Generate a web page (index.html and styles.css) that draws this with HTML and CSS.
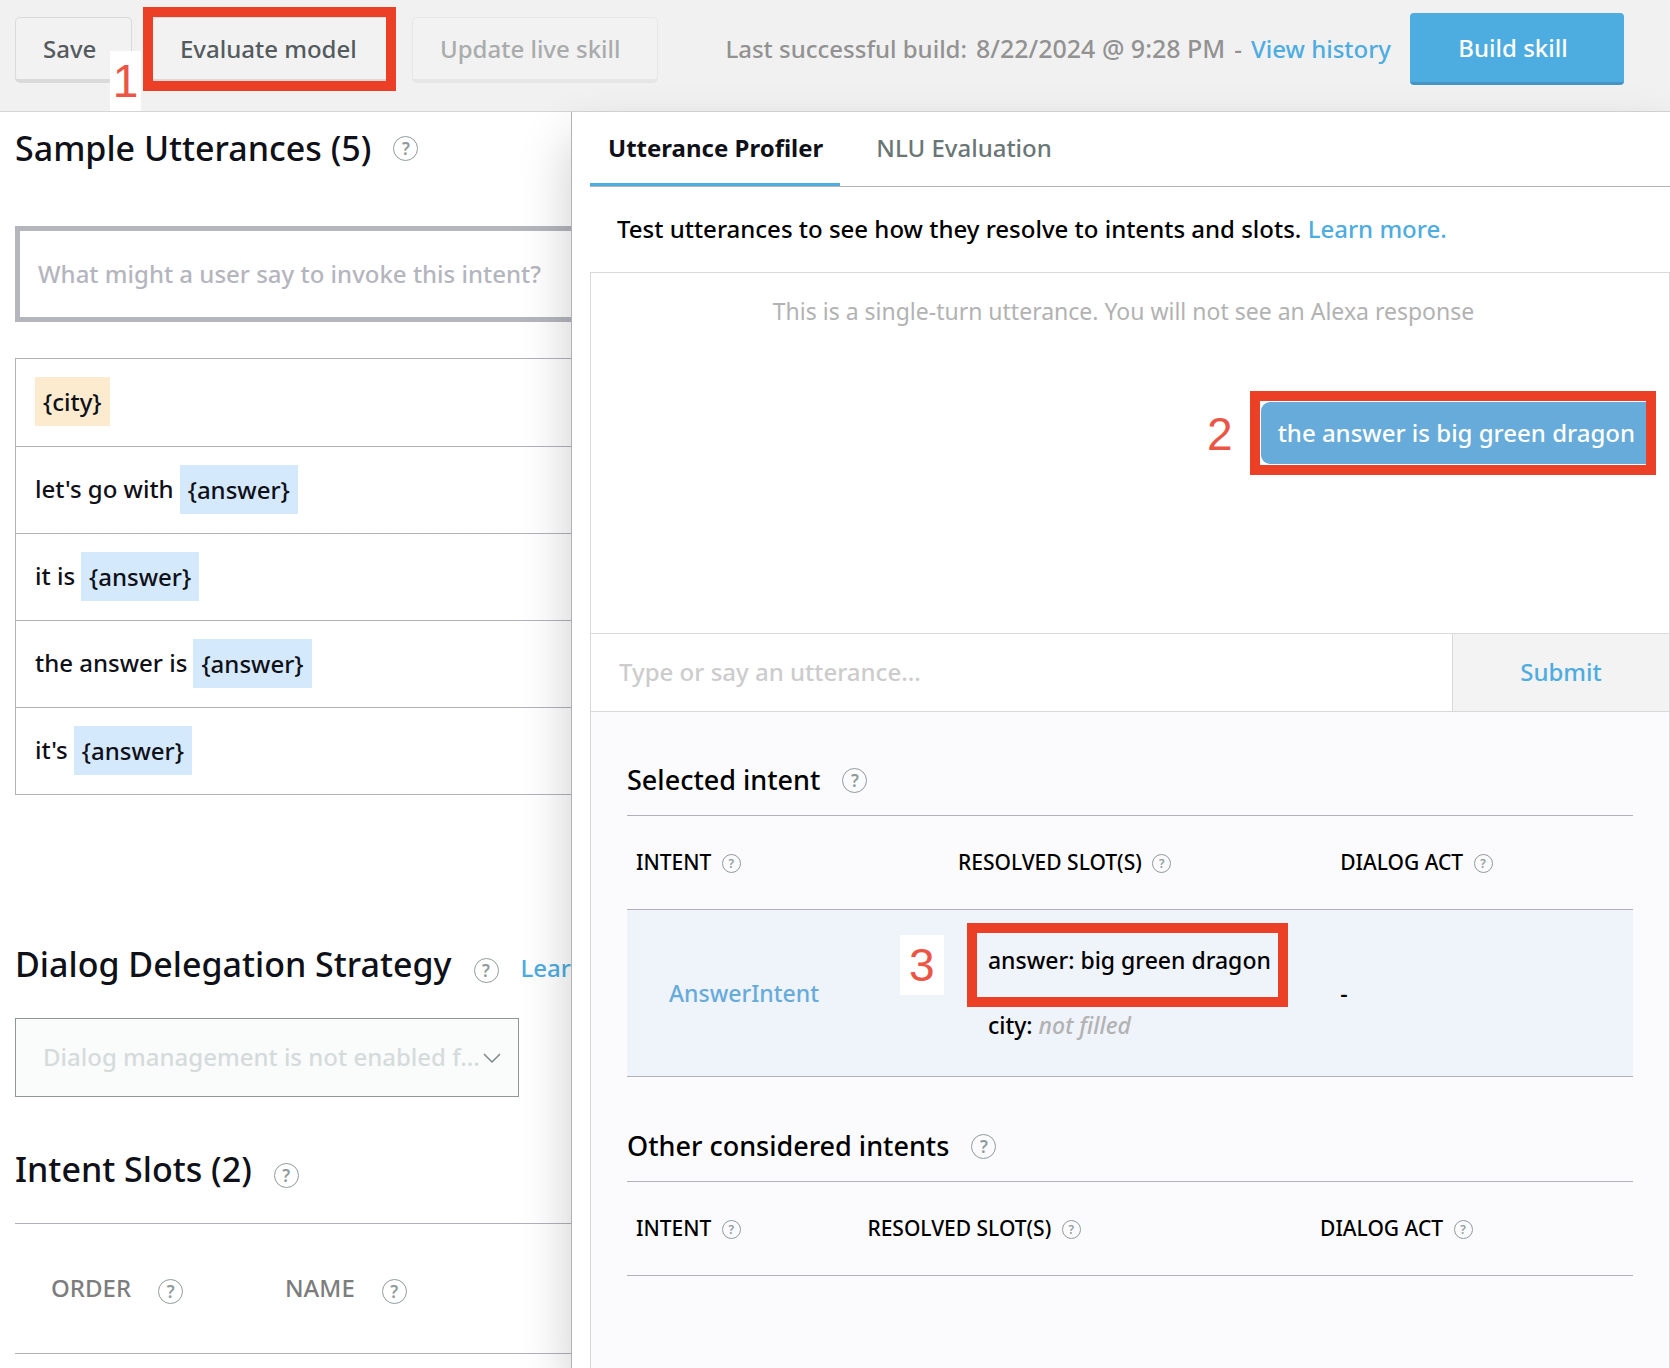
FILE: index.html
```html
<!DOCTYPE html>
<html lang="en">
<head>
<meta charset="utf-8">
<title>AnswerIntent - Interaction model</title>
<link rel="stylesheet" href="styles.css">
</head>
<body>
<header class="toolbar">
  <div class="anchor">
    <button class="btn btn-save" type="button">Save</button>
    <span class="step step-one">1</span>
  </div>
  <div class="anchor framed framed-button">
    <button class="btn btn-evaluate" type="button">Evaluate model</button>
  </div>
  <button class="btn btn-update" type="button" disabled>Update live skill</button>
  <p class="status">
    <span>Last successful build:</span>
    <time>8/22/2024 @ 9:28 PM</time>
    <span>-</span>
    <a href="#history">View history</a>
  </p>
  <button class="btn-build" type="button">Build skill</button>
</header>

<div class="workspace">
  <main class="editor">
    <section>
      <div class="heading">
        <h1>Sample Utterances (5)</h1>
        <span class="help">?</span>
      </div>
      <input class="utterance-input" type="text" aria-label="Sample utterance" placeholder="What might a user say to invoke this intent?">
      <ul class="utterances">
        <li><span class="slot slot-city">{city}</span></li>
        <li>let's go with <span class="slot">{answer}</span></li>
        <li>it is <span class="slot">{answer}</span></li>
        <li>the answer is <span class="slot">{answer}</span></li>
        <li>it's <span class="slot">{answer}</span></li>
      </ul>
    </section>

    <section class="delegation">
      <div class="heading heading-low">
        <h2>Dialog Delegation Strategy</h2>
        <span class="help">?</span>
        <a href="#learn">Learn more</a>
      </div>
      <div class="select">
        <select aria-label="Dialog delegation strategy" disabled>
          <option>Dialog management is not enabled f...</option>
        </select>
        <svg class="chevron" viewBox="0 0 18 11" width="18" height="11" aria-hidden="true"><path d="M1 1l8 8 8-8" fill="none" stroke="#7d8787" stroke-width="1.5"/></svg>
      </div>
    </section>

    <section class="slots">
      <div class="heading heading-low">
        <h2>Intent Slots (2)</h2>
        <span class="help">?</span>
      </div>
      <table class="slot-table">
        <thead>
          <tr>
            <th><span class="label">ORDER <span class="help">?</span></span></th>
            <th><span class="label">NAME <span class="help">?</span></span></th>
          </tr>
        </thead>
      </table>
    </section>
  </main>

  <aside class="panel">
    <nav class="tabs">
      <a class="tab tab-active" href="#profiler">Utterance Profiler</a>
      <a class="tab" href="#nlu">NLU Evaluation</a>
    </nav>
    <p class="intro">Test utterances to see how they resolve to intents and slots. <a href="#more">Learn more.</a></p>

    <div class="profiler">
      <div class="chat">
        <p class="notice">This is a single-turn utterance. You will not see an Alexa response</p>
        <div class="anchor framed framed-bubble">
          <span class="step step-two">2</span>
          <p class="bubble">the answer is big green dragon</p>
        </div>
      </div>
      <form class="entry">
        <input type="text" aria-label="Utterance" placeholder="Type or say an utterance...">
        <button type="button">Submit</button>
      </form>

      <div class="results">
        <section>
          <h3>Selected intent <span class="help">?</span></h3>
          <table class="intents intents-selected">
            <thead>
              <tr>
                <th>INTENT <span class="help help-small">?</span></th>
                <th>RESOLVED SLOT(S) <span class="help help-small">?</span></th>
                <th>DIALOG ACT <span class="help help-small">?</span></th>
              </tr>
            </thead>
            <tbody>
              <tr>
                <td class="intent-name"><a href="#answer">AnswerIntent</a></td>
                <td class="resolved">
                  <div class="anchor framed framed-slot"><span class="step step-three">3</span>answer: big green dragon</div>
                  <div>city: <em>not filled</em></div>
                </td>
                <td>-</td>
              </tr>
            </tbody>
          </table>
        </section>
        <section>
          <h3>Other considered intents <span class="help">?</span></h3>
          <table class="intents intents-other">
            <thead>
              <tr>
                <th>INTENT <span class="help help-small">?</span></th>
                <th>RESOLVED SLOT(S) <span class="help help-small">?</span></th>
                <th>DIALOG ACT <span class="help help-small">?</span></th>
              </tr>
            </thead>
          </table>
        </section>
      </div>
    </div>
  </aside>
</div>
</body>
</html>
```
FILE: styles.css
```css
* {
  box-sizing: border-box;
}

body {
  margin: 0;
  min-height: 100vh;
  display: flex;
  flex-direction: column;
  background: #fff;
  color: #0f1018;
  font: 500 24px/32px "Noto Sans", "Open Sans", sans-serif;
}

h1, h2, h3, p, ul {
  margin: 0;
  padding: 0;
}

button, input, select {
  font: inherit;
  margin: 0;
}

a {
  color: #4dace0;
  text-decoration: none;
}

.anchor {
  position: relative;
}

/* Toolbar */
.toolbar {
  display: flex;
  align-items: flex-start;
  padding: 13px 46px 26px 15px;
  background: #f1f1f1;
  border-bottom: 1px solid #d5d5d5;
  white-space: nowrap;
}

.btn {
  height: 66px;
  margin: 4px 20px 0 0;
  padding: 0 0 0 27px;
  border: 1px solid #dadada;
  border-bottom-width: 4px;
  border-radius: 5px;
  background: #f2f2f2;
  color: #545b5e;
  text-align: left;
}

.btn-save {
  width: 117px;
}

.btn-evaluate {
  width: 240px;
}

.btn-update {
  width: 246px;
  border-color: #e6e6e6;
  color: #a9abac;
}

.status {
  flex: 1;
  display: flex;
  align-items: baseline;
  justify-content: flex-end;
  gap: 9px;
  padding: 19px 19px 0 0;
  color: #929292;
}

.status time {
  font-size: 25px;
}

.btn-build {
  width: 214px;
  height: 72px;
  padding: 0 8px 0 0;
  border: 0;
  border-bottom: 3px solid #4295c4;
  border-radius: 4px;
  background: #4dace0;
  color: #fff;
}

/* Callouts */
.framed::after {
  content: "";
  position: absolute;
  border: 10px solid #eb4026;
  pointer-events: none;
}

.framed-button::after {
  inset: -6px 16px -8px -9px;
}

.framed-bubble::after {
  inset: -11px 0 -11px -11px;
}

.framed-slot::after {
  inset: -21px -17px -31px -21px;
}

.step {
  position: absolute;
  z-index: 1;
  color: #eb5545;
  font: 400 46px/60px "Liberation Sans", Arial, sans-serif;
  text-align: center;
}

.step-one {
  left: 95px;
  top: 38px;
  width: 31px;
  background: #fff;
}

.step-two {
  right: 100%;
  top: 2px;
  margin-right: 28px;
}

.step-three {
  right: 100%;
  top: -9px;
  width: 44px;
  margin-right: 44px;
  background: #fff;
}

/* Help marks */
.help {
  flex: none;
  display: inline-flex;
  align-items: center;
  justify-content: center;
  width: 25px;
  height: 25px;
  border: 1px solid #8f9b9b;
  border-radius: 50%;
  color: #8f9b9b;
  font: 600 17px/23px "Noto Sans", sans-serif;
}

.help-small {
  width: 19px;
  height: 19px;
  margin-left: 5px;
  font-size: 12px;
  line-height: 17px;
}

/* Left editor */
.workspace {
  flex: 1;
  display: grid;
  grid-template-columns: 571fr 1099fr;
}

.editor {
  min-width: 0;
  overflow: hidden;
  padding: 12px 0 0 15px;
}

.heading {
  display: flex;
  align-items: center;
  gap: 22px;
  white-space: nowrap;
}

.heading-low {
  align-items: baseline;
}

h1, h2 {
  font-size: 34px;
  line-height: 48px;
  font-weight: 500;
}

.utterance-input {
  display: block;
  width: 120%;
  height: 96px;
  margin-top: 54px;
  padding: 0 18px 2px;
  border: 5px solid #b5b5be;
  background: transparent;
}

.utterance-input::placeholder {
  color: #b5b5be;
  opacity: 1;
}

.utterances {
  width: 120%;
  margin-top: 36px;
  border: 1px solid #b1b1b9;
  list-style: none;
}

.utterances li {
  display: flex;
  align-items: center;
  gap: 6px;
  height: 87px;
  padding: 0 0 2px 19px;
}

.utterances li + li {
  border-top: 1px solid #b1b1b9;
}

.slot {
  padding: 8px;
  background: #d5e9fd;
  line-height: 33px;
}

.slot-city {
  background: #fdebd0;
}

.delegation {
  margin-top: 145px;
}

.select {
  position: relative;
  width: 504px;
  margin-top: 30px;
}

.select select {
  width: 100%;
  height: 79px;
  padding: 0 27px 2px;
  appearance: none;
  border: 1px solid #8f9696;
  border-radius: 0;
  background: #fafbfb;
  color: #d5dbdb;
  opacity: 1;
}

.chevron {
  position: absolute;
  right: 18px;
  top: 35px;
}

.slots {
  margin-top: 48px;
}

.slot-table {
  width: 120%;
  margin-top: 30px;
  border-collapse: collapse;
  border: solid #b1b1b9;
  border-width: 1px 0;
  table-layout: fixed;
}

.slot-table th {
  height: 130px;
  padding: 0 0 2px 36px;
  color: #7d7d7d;
  font-weight: 500;
  text-align: left;
}

.slot-table th:first-child {
  width: 234px;
}

.slot-table .label {
  display: flex;
  gap: 27px;
  align-items: flex-end;
}

/* Right panel */
.panel {
  display: flex;
  flex-direction: column;
  padding-left: 18px;
  border-left: 1px solid #b1b1b9;
  background: #fff;
  box-shadow: 0 26px 50px rgba(0, 0, 0, 0.2);
}

.tabs {
  display: flex;
  border-bottom: 1px solid #b1b1b9;
}

.tab {
  padding: 20px 17px 19px 18px;
  border-bottom: 3px solid transparent;
  color: #6a7676;
}

.tab + .tab {
  padding-left: 36px;
}

.tab-active {
  border-color: #4dace0;
  color: #0f1018;
  font-weight: 700;
}

.intro {
  padding: 26px 27px 27px;
  color: #000;
}

.profiler {
  flex: 1;
  display: flex;
  flex-direction: column;
  border: solid #d9d9d9;
  border-width: 1px 1px 0;
}

.chat {
  display: flex;
  flex-direction: column;
  align-items: flex-end;
  height: 360px;
  padding: 22px 13px 0 0;
}

.notice {
  align-self: center;
  color: #b2b2b2;
  font-size: 23px;
  font-weight: 400;
}

.framed-bubble {
  margin-top: 75px;
}

.bubble {
  padding: 15px 21px 15px 17px;
  border-radius: 9px;
  background: #66abda;
  color: #fff;
}

.entry {
  display: flex;
  border: solid #d9d9d9;
  border-width: 1px 0;
}

.entry input {
  flex: 1;
  min-width: 0;
  height: 77px;
  padding: 0 28px 2px;
  border: 0;
  background: #fff;
}

.entry input::placeholder {
  color: #cccccc;
  opacity: 1;
}

.entry button {
  width: 217px;
  padding: 0 0 2px;
  border: 0;
  border-left: 1px solid #d9d9d9;
  background: #f3f3f3;
  color: #4dace0;
}

.results {
  flex: 1;
  padding: 48px 36px 0;
  background: #fbfbfd;
  color: #000;
}

.results section + section {
  margin-top: 49px;
}

h3 {
  display: flex;
  align-items: center;
  gap: 22px;
  font-size: 27px;
  line-height: 40px;
  font-weight: 500;
}

.intents {
  width: 100%;
  margin-top: 15px;
  border-collapse: collapse;
  table-layout: fixed;
  border: solid #b1b1b9;
  border-width: 1px 0;
  text-align: left;
}

.intents th {
  height: 94px;
  padding: 0 0 2px 9px;
  font-size: 21px;
  font-weight: 500;
  white-space: nowrap;
}

.intents th .help {
  vertical-align: 2px;
}

.intents-selected th:nth-child(1) {
  width: 32%;
}

.intents-selected th:nth-child(2) {
  width: 38%;
}

.intents-other th:nth-child(1) {
  width: 23%;
}

.intents-other th:nth-child(2) {
  width: 45%;
}

.intents td {
  height: 167px;
  padding: 0 9px;
  border-top: 1px solid #b1b1b9;
  background: #eff3fa;
  font-size: 23px;
}

.intents .intent-name {
  padding-left: 42px;
}

.intents .intent-name a {
  color: #66abda;
}

.intents .resolved {
  padding: 0 0 2px 39px;
}

.resolved div {
  width: fit-content;
}

.resolved div + div {
  margin-top: 33px;
}

.resolved em {
  color: #b2b2b2;
}
```
